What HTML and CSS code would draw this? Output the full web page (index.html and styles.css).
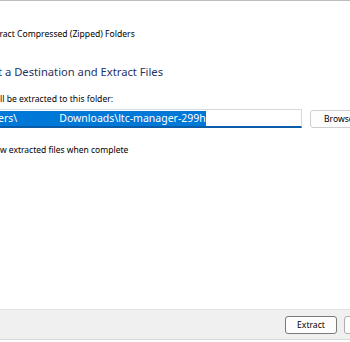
FILE: index.html
```html
<!DOCTYPE html>
<html lang="en">
<head>
    <meta charset="UTF-8">
    <title>Extract Compressed (Zipped) Folders</title>
    <link rel="stylesheet" href="styles.css">
</head>
<body>
    <div class="window">
        <div class="top-line"></div>
        <div class="title">Extract Compressed (Zipped) Folders</div>

        <div class="content">
            <h1>Select a Destination and Extract Files</h1>
            <label class="dest-label">Files will be extracted to this folder:</label>
            <div class="dest-row">
                <div class="path-box">
                    <span class="sel">C:\Users\<span class="gap"></span>Downloads\ltc-manager-299h</span>
                </div>
                <button class="btn browse">Browse...</button>
            </div>
            <div class="check-row">
                <span class="checkbox"></span>
                <span>Show extracted files when complete</span>
            </div>
        </div>

        <div class="footer">
            <button class="btn extract">Extract</button>
            <button class="btn cancel">Cancel</button>
        </div>
    </div>
</body>
</html>
```

FILE: styles.css
```css
body {
    margin: 0;
    padding: 0;
    background-color: #fff;
    font-family: "Noto Sans", "Open Sans", sans-serif;
    font-size: 9px;
    color: #000;
    overflow: hidden;
}

.window {
    width: 350px;
    height: 342px;
    display: flex;
    flex-direction: column;
    overflow: hidden;
}

.top-line {
    height: 1px;
    background-color: #bcbcbc;
}

.title {
    margin-top: 27px;
    margin-left: -13px;
    font-size: 8.6px;
    white-space: nowrap;
}

.content {
    margin-left: -29px;
    flex: 1;
}

h1 {
    margin: 24px 0 0;
    font-size: 11.2px;
    font-weight: normal;
    color: #1f3366;
    white-space: nowrap;
}

.dest-label {
    display: block;
    margin-top: 14px;
    font-size: 8.6px;
    white-space: nowrap;
}

.dest-row {
    display: flex;
    align-items: center;
    margin-top: 4px;
}

.path-box {
    flex-shrink: 0;
    width: 329px;
    height: 16px;
    border: 1px solid #d9d9d9;
    border-bottom: 2px solid #0b5ca8;
    display: flex;
    align-items: center;
    white-space: nowrap;
    overflow: hidden;
}

.sel {
    background-color: #0078d7;
    color: #fff;
    font-size: 10.5px;
    line-height: 15px;
}

.gap {
    display: inline-block;
    width: 42px;
}

.btn {
    font-family: inherit;
    font-size: 8.6px;
    background-color: #fdfdfd;
    border: 1px solid #adadad;
    border-radius: 3px;
    padding: 0;
    height: 18px;
    color: #000;
}

.browse {
    flex-shrink: 0;
    margin-left: 8px;
    width: 75px;
    border-color: #cfcfcf;
    text-align: left;
    padding-left: 13px;
}

.check-row {
    display: flex;
    align-items: center;
    gap: 6px;
    margin-top: 15px;
    margin-left: -4px;
    font-size: 8.5px;
    white-space: nowrap;
}

.checkbox {
    width: 10px;
    height: 10px;
    border: 1px solid #333;
}

.footer {
    height: 29px;
    margin-bottom: 2px;
    background-color: #f0f0f0;
    border-top: 1px solid #e3e3e3;
    border-bottom: 1px solid #dadada;
    display: flex;
    align-items: center;
    gap: 7px;
    padding-left: 285px;
}

.extract {
    width: 52px;
    flex-shrink: 0;
    border-color: #7a7a7a;
}

.cancel {
    width: 70px;
    flex-shrink: 0;
}
```
